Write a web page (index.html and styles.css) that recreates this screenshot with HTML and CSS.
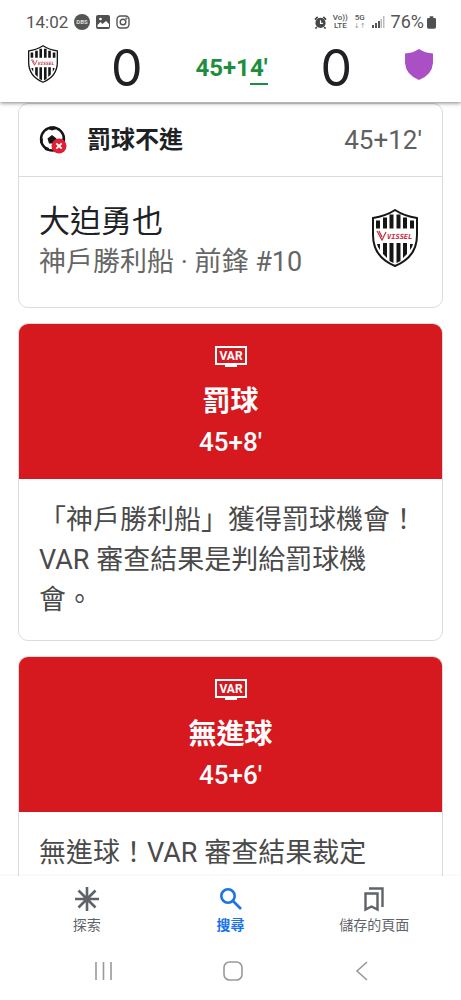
FILE: index.html
```html
<!DOCTYPE html>
<html lang="zh-Hant">
  <head>
    <meta charset="UTF-8" />
    <meta name="viewport" content="width=device-width, initial-scale=1" />
    <title>比賽動態</title>
    <link rel="stylesheet" href="styles.css">
  </head>
  <body>
    <!-- club crest and VAR screen, used more than once -->
    <svg class="sprite" aria-hidden="true">
      <symbol id="crest" viewBox="0 0 46 58">
        <path d="M23 1 Q32 7 45 9 V26 Q45 48 23 57 Q1 48 1 26 V9 Q14 7 23 1Z" fill="#fff" stroke="#161616" stroke-width="2" />
        <path d="M4 11.500h4v8h-4zM11 8.500h4v11h-4zM17.500 5.500h4v14h-4zM24.500 5.500h4v14h-4zM31 8.500h4v11h-4zM38 11.500h4v8h-4zM5 35h3v6l-2-3zM11 34h4v15l-4-4zM17.500 34h4v20l-4-2zM24.500 34h4v18l-4 2zM31 34h4v11l-4 4zM38 35h3l-1 3-2 3z" fill="#161616" />
        <path d="M5 22l5 9 4-8M7 22l3 6" fill="none" stroke="#c3283c" stroke-width="1.200" />
      </symbol>
      <symbol id="var" viewBox="0 0 32 22">
        <rect x="1" y="1" width="30" height="17" fill="none" stroke="#fff" stroke-width="2" />
        <path d="M10 18h12v3h-12z" fill="#fff" />
      </symbol>
    </svg>

    <header class="top">
      <div class="status">
        <div class="status-group">
          <span>14:02</span>
          <svg width="16" height="16" viewBox="0 0 16 16">
            <circle cx="8" cy="8" r="8" fill="#555" />
            <text x="8" y="10" text-anchor="middle" class="badge-text">DBS</text>
          </svg>
          <svg width="14" height="14" viewBox="0 0 14 14">
            <rect width="14" height="14" rx="2" fill="#505050" />
            <path d="M1.500 10l3-3 2 2 3.500-3 3 3v3h-11.500z" fill="#fff" />
            <circle cx="4.500" cy="4" r="1.300" fill="#fff" />
          </svg>
          <svg width="14" height="14" viewBox="0 0 14 14" fill="none" stroke="#555" stroke-width="1.400">
            <rect x="1" y="1" width="12" height="12" rx="3.500" />
            <circle cx="7" cy="7" r="2.800" />
            <circle cx="10.400" cy="3.600" r=".4" />
          </svg>
        </div>
        <div class="status-group status-right">
          <svg width="13" height="13" viewBox="0 0 14 14">
            <circle cx="7" cy="7.500" r="5.500" fill="#484848" />
            <path d="M1 4l3-3M13 4l-3-3M3 12l-1.500 1.500M11 12l1.500 1.500" stroke="#484848" stroke-width="1.800" />
            <path d="M7 4.500v3.500h2.500" fill="none" stroke="#fff" stroke-width="1.200" />
          </svg>
          <span class="tiny">Vo))<br>LTE</span>
          <span class="tiny">5G<br><span class="arrows">↓↑</span></span>
          <svg width="13" height="12" viewBox="0 0 13 12">
            <path d="M0 9h2v3h-2zM3 7h2v5h-2zM6 5h2v7h-2z" fill="#555" />
            <path d="M8.500 3h1.500v9h-1.500zM11 0h1.500v12h-1.500z" fill="#bbb" />
          </svg>
          <span class="percent">76%</span>
          <svg width="9" height="13" viewBox="0 0 10 14">
            <path d="M3 0h4v2h1.500q1.500 0 1.500 1.500v8.500q0 2-2 2h-6q-2 0-2-2v-8.500q0-1.500 1.500-1.500h1.500z" fill="#505050" />
          </svg>
        </div>
      </div>
      <div class="score">
        <svg class="crest-small" viewBox="0 0 46 58">
          <use href="#crest" />
          <text x="15" y="30" class="crest-name">VISSEL</text>
        </svg>
        <span class="goals">0</span>
        <span class="clock">45+1<span class="clock-tick">4'</span></span>
        <span class="goals">0</span>
        <svg class="shield" viewBox="0 0 28 31">
          <path d="M14 0 Q20 4 28 4.500 V14 Q27 26 14 31 Q1 26 0 14 V4.500 Q8 4 14 0Z" fill="#aa4fc4" />
        </svg>
      </div>
    </header>

    <main class="feed">
      <article class="card">
        <div class="card-head">
          <svg class="ball" viewBox="0 0 28 28">
            <circle cx="13.500" cy="13" r="11.500" fill="#fff" stroke="#161616" stroke-width="2.400" />
            <path d="M13 9l4.500 3.500-1.500 5h-6l-1.500-5zM8 2.500l5 2 6-2-3-2h-5zM1 10l3 3-1 6-2-3zM26 9l-3 4 2 2zM5 20l5 2v3l-4-1z" fill="#161616" />
            <circle cx="20" cy="20" r="7.500" fill="#e01f33" />
            <path d="M17.300 17.300l5.400 5.400M22.700 17.300l-5.400 5.400" stroke="#fff" stroke-width="1.800" />
          </svg>
          <h2 class="card-title">罰球不進</h2>
          <span class="card-time">45+12'</span>
        </div>
        <div class="player">
          <div>
            <div class="player-name">大迫勇也</div>
            <div class="player-info">神戶勝利船 · 前鋒 #10</div>
          </div>
          <svg class="crest-big" viewBox="0 0 46 58">
            <use href="#crest" />
            <text x="15" y="30" class="crest-name">VISSEL</text>
          </svg>
        </div>
      </article>

      <article class="card">
        <div class="var-head">
          <svg class="var-icon" viewBox="0 0 32 22">
            <use href="#var" />
            <text x="16" y="14" text-anchor="middle" class="var-name">VAR</text>
          </svg>
          <h2 class="var-title">罰球</h2>
          <div class="var-time">45+8'</div>
        </div>
        <p class="card-text">「神戶勝利船」獲得罰球機會！VAR 審查結果是判給罰球機會。</p>
      </article>

      <article class="card card-last">
        <div class="var-head">
          <svg class="var-icon" viewBox="0 0 32 22">
            <use href="#var" />
            <text x="16" y="14" text-anchor="middle" class="var-name">VAR</text>
          </svg>
          <h2 class="var-title">無進球</h2>
          <div class="var-time">45+6'</div>
        </div>
        <p class="card-text">無進球！VAR 審查結果裁定</p>
      </article>
    </main>

    <footer class="bottom">
      <nav class="tabs">
        <a class="tab" href="#explore">
          <svg width="26" height="26" viewBox="0 0 26 26" stroke="#5f6368" stroke-width="2.600">
            <path d="M13 1v24M1 13h24M4.500 4.500l17 17M21.500 4.500l-17 17" />
          </svg>
          探索
        </a>
        <a class="tab tab-active" href="#search">
          <svg width="26" height="26" viewBox="0 0 26 26" fill="none" stroke="#1a73e8" stroke-width="2.600">
            <circle cx="10" cy="10" r="6.700" />
            <path d="M15 15l8 8" />
          </svg>
          搜尋
        </a>
        <a class="tab" href="#saved">
          <svg width="26" height="26" viewBox="0 0 26 26" fill="none" stroke="#5f6368" stroke-width="2.400">
            <path d="M4.500 7.500h12v16l-6-3-6 3zM8 2.500h13.500v18.500" />
          </svg>
          儲存的頁面
        </a>
      </nav>
      <div class="system">
        <button class="key" aria-label="最近">
          <svg width="20" height="20" viewBox="0 0 20 20"><path d="M3 1v18M10.500 1v18M18 1v18" /></svg>
        </button>
        <button class="key" aria-label="主畫面">
          <svg width="20" height="20" viewBox="0 0 20 20"><rect x="1" y="1" width="18" height="18" rx="5.500" /></svg>
        </button>
        <button class="key" aria-label="返回">
          <svg width="20" height="20" viewBox="0 0 20 20"><path d="M14 1l-10 9 10 9" /></svg>
        </button>
      </div>
    </footer>
  </body>
</html>
```
FILE: styles.css
```css
* {
  box-sizing: border-box;
}
body {
  margin: 0;
  height: 100vh;
  display: flex;
  flex-direction: column;
  overflow: hidden;
  background-color: #fff;
  color: #202124;
  font-family: Roboto, "Noto Sans CJK TC", sans-serif;
}
h2,
p {
  margin: 0;
}
svg {
  display: block;
  flex: none;
}
.sprite {
  position: absolute;
  width: 0;
  height: 0;
}

/* status bar and score */
.top {
  position: relative;
  z-index: 1;
  padding-bottom: 6px;
  background-color: #fff;
  box-shadow: 0 1px 4px rgba(0, 0, 0, 0.5);
}
.status {
  display: flex;
  justify-content: space-between;
  padding: 12px 25px 0 26px;
  height: 32px;
  font-size: 17px;
  line-height: 20px;
  color: #555;
}
.status-group {
  display: flex;
  align-items: center;
  gap: 6px;
}
.percent {
  margin-right: -3px;
  font-size: 18px;
}
.tiny {
  font-size: 8px;
  line-height: 8px;
  font-weight: 500;
  text-align: center;
}
.arrows {
  font-family: "DejaVu Sans", sans-serif;
  font-size: 7px;
  color: #999;
}
.score {
  display: flex;
  justify-content: space-between;
  align-items: center;
  padding: 0 28px;
  height: 64px;
}
.goals {
  padding-top: 8px;
  font-family: Inter, sans-serif;
  font-size: 50px;
  line-height: 56px;
}
.clock {
  padding-top: 8px;
  font-size: 24px;
  line-height: 32px;
  font-weight: 700;
  color: #1e8e3e;
}
.clock-tick {
  display: inline-block;
  line-height: 30px;
  border-bottom: 2px solid #1e8e3e;
}
.crest-small {
  width: 30px;
  height: 38px;
}
.shield {
  width: 28px;
  height: 31px;
}
.crest-name {
  font: italic 700 7px "DejaVu Sans Mono", monospace;
  fill: #c3283c;
}
.badge-text {
  font-size: 6px;
  font-weight: 700;
  fill: #ddd;
}

/* match events */
.feed {
  flex: 1;
  min-height: 0;
  display: flex;
  flex-direction: column;
  gap: 15px;
  overflow: hidden;
  padding: 1px 18px 0;
}
.card {
  flex: none;
  border: 1px solid #dadce0;
  border-radius: 10px;
  overflow: hidden;
}
.card-last {
  flex: 1 0 auto;
  border-bottom: 0;
  border-bottom-left-radius: 0;
  border-bottom-right-radius: 0;
}
.card-head {
  display: flex;
  align-items: center;
  height: 73px;
  padding: 0 20px;
  border-bottom: 1px solid #dadce0;
}
.ball {
  width: 28px;
  height: 28px;
}
.card-title {
  margin-left: 20px;
  font-size: 24px;
  line-height: 32px;
}
.card-time {
  margin-left: auto;
  font-size: 26px;
  line-height: 32px;
  color: #606060;
}
.player {
  display: flex;
  justify-content: space-between;
  padding: 25px 24px 24px 20px;
}
.player-name {
  font-size: 31px;
  line-height: 40px;
}
.player-info {
  font-size: 27px;
  line-height: 41px;
  color: #666;
}
.crest-big {
  width: 46px;
  height: 58px;
  margin-top: 7px;
}
.var-head {
  display: flex;
  flex-direction: column;
  align-items: center;
  padding: 22px 0 16px;
  background-color: #d6181f;
  color: #fff;
}
.var-icon {
  width: 32px;
  height: 22px;
}
.var-name {
  font-size: 12px;
  font-weight: 700;
  fill: #fff;
}
.var-title {
  margin-top: 13px;
  font-size: 28px;
  line-height: 41px;
}
.var-time {
  font-size: 26px;
  line-height: 41px;
  font-weight: 500;
}
.card-text {
  padding: 21px 24px 20px 20px;
  font-size: 27px;
  line-height: 40px;
  color: #4a4a4a;
}
.card-last .card-text {
  padding-bottom: 0;
}

/* app tabs and system keys */
.bottom {
  position: relative;
  background-color: #fff;
  box-shadow: 0 0 3px rgba(0, 0, 0, 0.08);
}
.tabs {
  display: flex;
  padding: 10px 15px 0;
}
.tab {
  flex: 1;
  display: flex;
  flex-direction: column;
  align-items: center;
  font-size: 14px;
  line-height: 26px;
  color: #5f6368;
  text-decoration: none;
}
.tab-active {
  color: #1a73e8;
  font-weight: 700;
}
.system {
  display: flex;
  justify-content: space-between;
  padding: 23px 88px 19px 93px;
}
.key {
  padding: 0;
  border: 0;
  background: none;
}
.key svg {
  fill: none;
  stroke: #999;
  stroke-width: 1.6px;
}
```
